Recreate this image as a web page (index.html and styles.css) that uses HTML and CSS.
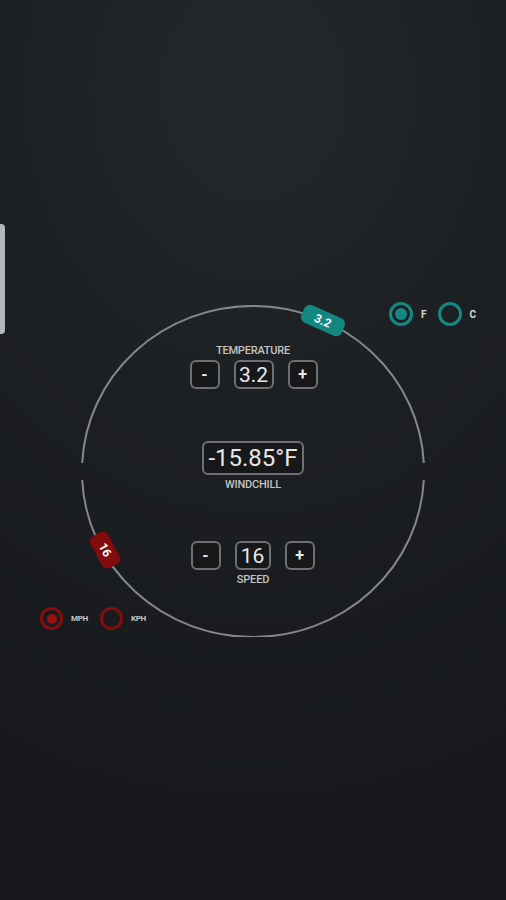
FILE: index.html
```html
<!DOCTYPE html>
<html>
<head>
<meta charset="utf-8">
<link rel="stylesheet" href="styles.css">
</head>
<body>
<div class="stage">
  <div class="side-tab"></div>
  <div class="dial">
    <svg class="ring" width="344" height="332" viewBox="0 0 344 332">
      <path d="M1.2,158 A171,165 0 0 1 342.8,158" fill="none" stroke="#85878a" stroke-width="2"/>
      <path d="M1.2,175 A171,165 0 0 0 342.8,175" fill="none" stroke="#85878a" stroke-width="2"/>
    </svg>
    <div class="badge badge-temp">3.2</div>
    <div class="badge badge-speed">16</div>

    <div class="units units-temp">
      <span class="radio teal checked"></span><span class="ulabel">F</span>
      <span class="radio teal"></span><span class="ulabel">C</span>
    </div>
    <div class="units units-speed">
      <span class="radio red checked"></span><span class="ulabel small">MPH</span>
      <span class="radio red"></span><span class="ulabel small">KPH</span>
    </div>

    <div class="controls">
      <div class="label">TEMPERATURE</div>
      <div class="stepper">
        <div class="btn">-</div>
        <div class="val">3.2</div>
        <div class="btn">+</div>
      </div>
      <div class="result">-15.85°F</div>
      <div class="label wc">WINDCHILL</div>
      <div class="stepper speed">
        <div class="btn">-</div>
        <div class="val">16</div>
        <div class="btn">+</div>
      </div>
      <div class="label sp">SPEED</div>
    </div>
  </div>
</div>
</body>
</html>
```
FILE: styles.css
```css
* { box-sizing: border-box; }
html, body { margin: 0; padding: 0; }
body {
  width: 506px;
  height: 900px;
  overflow: hidden;
  font-family: Roboto, "Liberation Sans", sans-serif;
  background: radial-gradient(ellipse 120% 80% at 50% 10%, #25282b 0%, #1d2023 45%, #16181b 100%);
}
.stage {
  position: relative;
  width: 506px;
  height: 900px;
  padding-top: 305px;
}
.side-tab {
  position: absolute;
  left: 0;
  top: 224px;
  width: 5px;
  height: 110px;
  background: #b4b6b8;
  border-radius: 0 4px 4px 0;
}
.dial {
  position: relative;
  margin-left: 81px;
  width: 344px;
  height: 332px;
}
.ring {
  position: absolute;
  left: 0;
  top: 0;
}
.badge {
  position: absolute;
  display: flex;
  align-items: center;
  justify-content: center;
  color: #fff;
  font-weight: bold;
  font-size: 12px;
  border-radius: 6px;
}
.badge-temp {
  left: 220px;
  top: 6px;
  width: 44px;
  height: 19px;
  background: #148681;
  transform: rotate(24deg);
}
.badge-speed {
  left: 6px;
  top: 235px;
  width: 36px;
  height: 20px;
  background: #820c0c;
  transform: rotate(62deg);
}
.units {
  position: absolute;
  display: flex;
  align-items: center;
}
.units-temp {
  left: 308px;
  top: -3px;
}
.units-speed {
  left: -41px;
  top: 302px;
}
.radio {
  width: 24px;
  height: 24px;
  border-radius: 50%;
  border: 3px solid;
  display: flex;
  align-items: center;
  justify-content: center;
}
.radio.teal { border-color: #168883; }
.radio.red { border-color: #850d0d; width: 23px; height: 23px; }
.radio.checked::after {
  content: "";
  width: 12px;
  height: 12px;
  border-radius: 50%;
  background: #168883;
}
.radio.red.checked::after { background: #9c0f0f; width: 10px; height: 10px; }
.ulabel {
  color: #d9d9d9;
  font-size: 10px;
  font-weight: bold;
  margin: 0 11px 0 8px;
}
.ulabel.small { font-size: 8px; margin: 0 12px 0 8px; color: #c8c8c8; letter-spacing: -0.3px; }
.controls {
  position: relative;
  display: flex;
  flex-direction: column;
  align-items: center;
  padding-top: 39px;
}
.label {
  color: #c4c4c4;
  font-size: 11px;
  font-weight: 500;
  letter-spacing: -0.2px;
  line-height: 13px;
}
.stepper {
  display: flex;
  gap: 14px;
  margin-top: 3px;
  margin-left: 1px;
}
.btn, .val {
  height: 29px;
  border: 2px solid #6e7073;
  border-radius: 6px;
  background: #16181a;
  color: #e8e8e8;
  display: flex;
  align-items: center;
  justify-content: center;
}
.btn {
  width: 30px;
  font-size: 16px;
  font-weight: bold;
}
.val {
  width: 40px;
  font-size: 21px;
}
.result {
  margin-top: 52px;
  margin-left: 0;
  height: 34px;
  padding: 0 4px;
  border: 2px solid #6e7073;
  border-radius: 6px;
  background: #16181a;
  color: #e6e6e6;
  font-size: 24px;
  line-height: 30px;
}
.wc { margin-top: 3px; }
.stepper.speed {
  margin-top: 50px;
  gap: 14px;
  margin-left: -1px;
}
.stepper.speed .val { width: 36px; }
.sp { margin-top: 3px; }
```
